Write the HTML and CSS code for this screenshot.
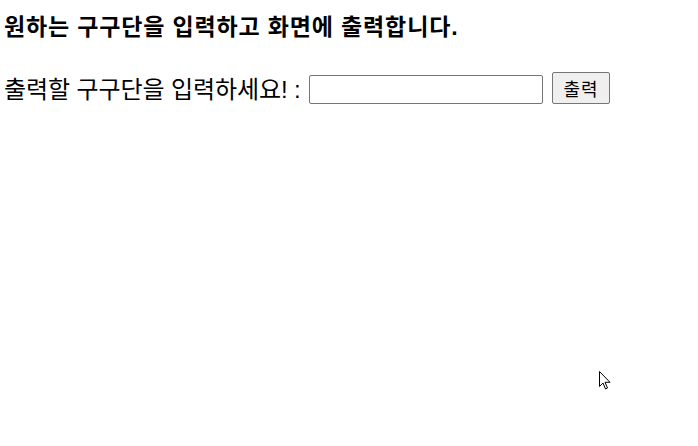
FILE: index.html
```html
<!DOCTYPE html>
<html lang="ko">
<head>
    <meta charset="UTF-8">
    <meta name="viewport" content="width=device-width, initial-scale=1.0">
    <title>구구단 출력</title>
    <link rel="stylesheet" href="styles.css">
</head>
<body>
    <h3 class="title">원하는 구구단을 입력하고 화면에 출력합니다.</h3>

    <div class="form-row">
        <label for="dan" class="prompt">출력할 구구단을 입력하세요! :</label>
        <input type="text" id="dan" class="dan-input">
        <button class="print-btn">출력</button>
    </div>

    <svg class="cursor" width="12" height="20" viewBox="0 0 12 20">
        <path d="M0.5 0.5 L0.5 15.5 L4 12 L6.5 18 L8.5 17 L6 11.3 L11 11.3 Z" fill="#fff" stroke="#000" stroke-width="1"/>
    </svg>
</body>
</html>
```

FILE: styles.css
```css
body {
    margin: 0;
    padding: 0 4px;
    font-family: "Liberation Sans", "Noto Sans CJK KR", sans-serif;
    color: #000;
    background: #fff;
}

.title {
    font-size: 23px;
    font-weight: bold;
    letter-spacing: 0.85px;
    margin: 15px 0 33px;
    line-height: 24px;
}

.form-row {
    display: flex;
    align-items: flex-end;
    font-size: 24px;
    height: 32px;
}

.prompt {
    line-height: 28px;
    letter-spacing: -0.1px;
}

.dan-input {
    box-sizing: border-box;
    width: 234px;
    height: 29px;
    margin-left: 8px;
    border: 1px solid #767676;
    border-radius: 2px;
    font-size: 20px;
    padding: 1px 2px;
}

.print-btn {
    box-sizing: border-box;
    width: 58px;
    height: 32px;
    margin-left: 9px;
    border: 1px solid #767676;
    border-radius: 2px;
    background: #efefef;
    font-family: "Noto Sans CJK KR", sans-serif;
    font-size: 18px;
    letter-spacing: 1px;
    padding: 0 0 0 1px;
}

.cursor {
    position: absolute;
    left: 599px;
    top: 371px;
}
```
